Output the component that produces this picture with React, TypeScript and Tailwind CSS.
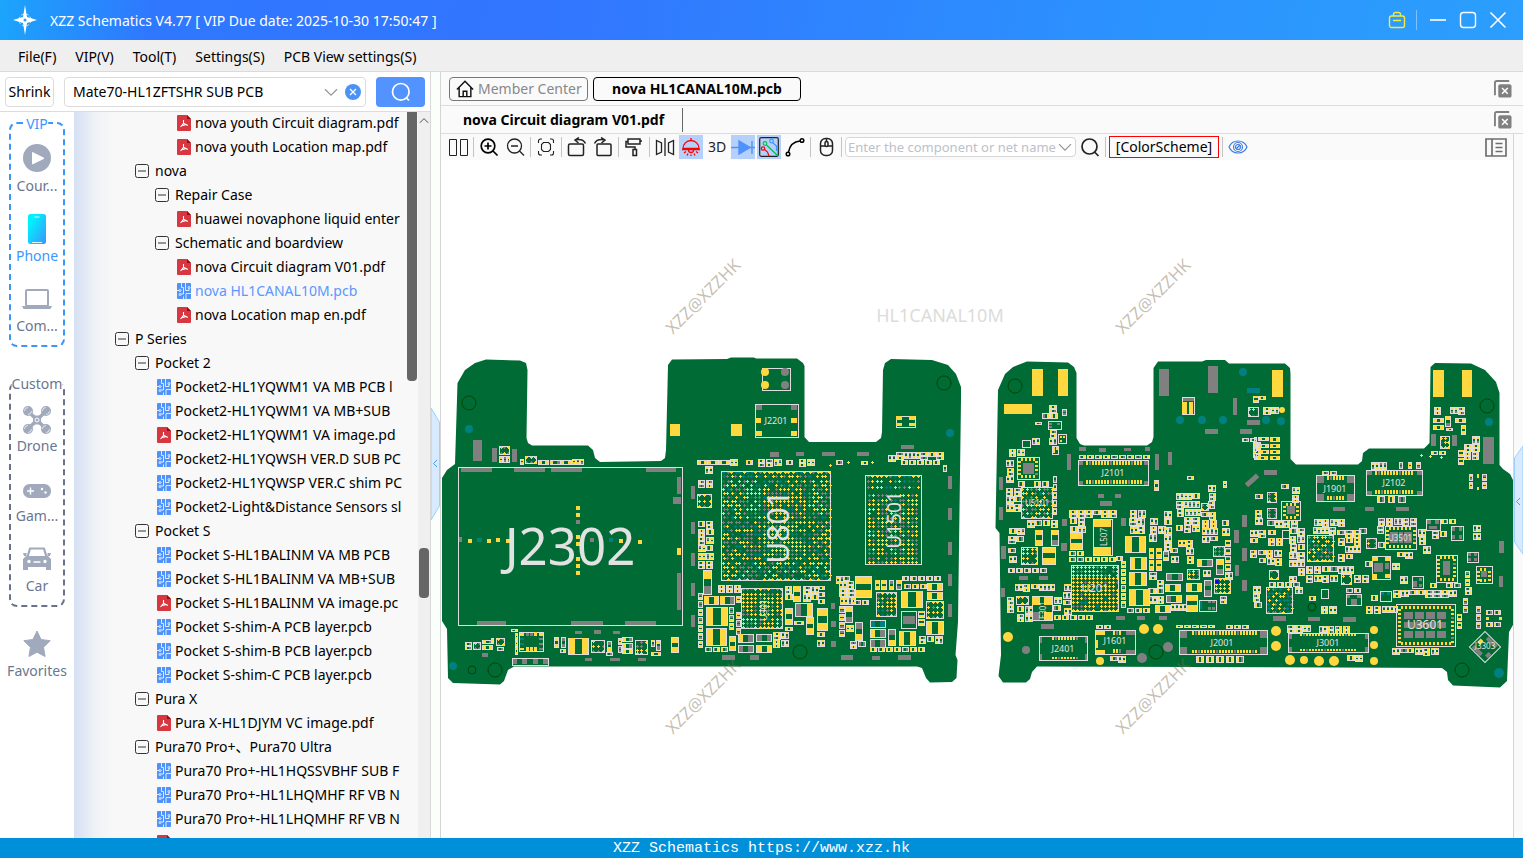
import type { ReactNode } from 'react';
import clsx from 'clsx';

type Rect = [number, number, number, number];
type Ink = 'y' | 'g' | 't';

const INK = { y: '#ffd83f', g: '#808080', t: '#008080', line: '#dedede', board: '#006b35' };

/* ---------- board drawing ---------- */

function random(seed: number) {
  let s = seed * 7919 + 13;
  return () => {
    s = (s * 1103515245 + 12345) % 2147483648;
    return s / 2147483648;
  };
}

// Collects the pads and silkscreen of one board section into a few paths.
class Sheet {
  pads = { y: '', g: '', t: '' };
  lines = '';

  pad(c: Ink, x: number, y: number, w: number, h: number) {
    this.pads[c] += `M${x} ${y}h${w}v${h}h${-w}z`;
    return this;
  }
  rects(c: Ink, list: Rect[]) {
    list.forEach(r => this.pad(c, ...r));
    return this;
  }
  outline(x: number, y: number, w: number, h: number) {
    this.lines += `M${x} ${y}h${w}v${h}h${-w}z`;
    return this;
  }
  // two-terminal part, pads on its long ends
  part(x: number, y: number, w: number, h: number, a: Ink = 'y', b: Ink = 'y', vertical = h > w) {
    this.outline(x, y, w, h);
    if (vertical) {
      const p = Math.max(4, Math.round(h * 0.34));
      this.pad(a, x + 1, y + 1, w - 2, p).pad(b, x + 1, y + h - p - 1, w - 2, p);
    } else {
      const p = Math.max(4, Math.round(w * 0.3));
      this.pad(a, x + 1, y + 1, p, h - 2).pad(b, x + w - p - 1, y + 1, p, h - 2);
    }
    return this;
  }
  parts(list: Rect[], seed = 1) {
    const r = random(seed);
    list.forEach(p => this.part(...p, r() < 0.25 ? 'g' : 'y', r() < 0.4 ? 'g' : 'y'));
    return this;
  }
  // big capacitors and coils: wide yellow ends
  big(list: Rect[], vertical = false) {
    list.forEach(p => this.part(...p, 'y', 'y', vertical));
    return this;
  }
  // ball grid array
  bga(x: number, y: number, w: number, h: number, mix: [number, number] = [0.25, 0.05], pitch = 12, frame = true, skew = 0) {
    const r = random(x + y * 3 + w);
    if (frame) this.outline(x, y, w, h);
    const nx = Math.max(2, Math.round(w / pitch));
    const ny = Math.max(2, Math.round(h / pitch));
    for (let j = 0; j < ny; j++) {
      for (let i = 0; i < nx; i++) {
        const k = r();
        if (k > 0.96) continue;
        const c: Ink = k < mix[1] ? 't' : k < mix[0] + mix[1] ? 'g' : 'y';
        const edge = i < 6 || i > nx - 6 || j < 4 || j > ny - 6;
        const off = skew && edge && (i + j) % 2 ? skew : 0;
        const cx = Math.round((x + 4 + (i * (w - 8)) / (nx - 1)) / 3) * 3 + off;
        const cy = Math.round((y + 4 + (j * (h - 8)) / (ny - 1)) / 3) * 3;
        this.pad(c, cx - 4, cy - 1, 9, 3).pad(c, cx - 1, cy - 4, 3, 9);
      }
    }
    return this;
  }
  // chip with pads round its edge and a gray slug in the middle
  quad(x: number, y: number, w: number, h: number, slug?: Rect) {
    this.outline(x, y, w, h);
    for (let i = x + 12; i < x + w - 12; i += 12) this.pad('y', i, y + 3, 6, 9).pad('y', i, y + h - 12, 6, 9);
    for (let j = y + 12; j < y + h - 12; j += 12) this.pad('y', x + 3, j, 9, 6).pad(j % 5 ? 'y' : 'g', x + w - 12, j, 9, 6);
    if (slug) this.pad('g', ...slug);
    return this;
  }
  connector(x: number, y: number, w: number, h: number, from: number, to: number, corner: [number, number], ph = 12) {
    this.outline(x, y, w, h);
    const [cw, ch] = corner;
    this.rects('g', [[x + 2, y + 2, cw, ch], [x + w - cw - 2, y + 2, cw, ch], [x + 2, y + h - ch - 2, cw, ch], [x + w - cw - 2, y + h - ch - 2, cw, ch]]);
    let n = 0;
    for (let i = from; i < to; i += 9) {
      n++;
      this.pad(n % 7 === 2 ? 'g' : 'y', i, y + 3, 6, ph).pad(n % 6 === 3 ? 'g' : 'y', i, y + h - ph - 3, 6, ph);
    }
    return this;
  }
  // loose field of small parts
  field(x: number, y: number, x2: number, y2: number, fill = 0.85) {
    const r = random(x * 5 + y + x2);
    const c = (): Ink => (r() < 0.7 ? 'y' : 'g');
    if (y2 - y < 16) {
      for (let i = x; i < x2 - 12; i += 24) if (r() < fill) this.part(i, y, 18, y2 - y, c(), c());
      return this;
    }
    if (x2 - x < 18) {
      for (let j = y; j < y2 - 12; j += 24) if (r() < fill) this.part(x, j, x2 - x, 18, c(), c());
      return this;
    }
    for (let j = y; j < y2 - 14; j += 24) {
      for (let i = x + Math.floor(r() * 4); i < x2 - 14; i += 24) {
        const k = r();
        if (k > fill) continue;
        if (k < fill * 0.4) this.part(i, j, 19, 9, c(), c()).part(i, j + 12, 19, 9, c(), c());
        else if (k < fill * 0.8) this.part(i, j, 9, 19, c(), c()).part(i + 12, j, 9, 19, c(), c());
        else this.part(i, j, 20, 14, c(), c());
      }
    }
    return this;
  }
}

const sectionA = new Sheet()
  .outline(55, 352, 673, 475)
  .rects('g', [[99, 270, 27, 63], [156, 294, 15, 42], [216, 297, 15, 39], [63, 354, 93, 12], [222, 354, 93, 12], [333, 354, 93, 12], [618, 354, 90, 12],
    [711, 381, 12, 51], [699, 441, 24, 21], [711, 669, 12, 111], [111, 813, 87, 12], [393, 813, 96, 12], [555, 813, 93, 12], [753, 408, 12, 39],
    [753, 516, 12, 36], [753, 609, 12, 39], [753, 699, 12, 39], [753, 795, 12, 36], [126, 909, 18, 12], [405, 843, 21, 9], [462, 840, 21, 12],
    [519, 843, 21, 9], [435, 924, 21, 9], [510, 924, 30, 9], [594, 924, 24, 9], [54, 561, 12, 15], [450, 564, 12, 12], [408, 510, 12, 12]])
  .rects('y', [[690, 222, 30, 36], [408, 468, 12, 12], [408, 489, 12, 12], [408, 555, 12, 12], [408, 576, 12, 12], [408, 621, 12, 12], [408, 642, 12, 12],
    [408, 663, 12, 12], [84, 567, 12, 12], [141, 567, 12, 12], [168, 564, 12, 12], [198, 567, 12, 12], [537, 567, 12, 12], [594, 570, 12, 12],
    [477, 570, 6, 12], [711, 594, 12, 21]])
  .rects('t', [[111, 564, 15, 12], [507, 564, 12, 12], [240, 864, 12, 6], [240, 880, 12, 6]])
  .parts([[295, 331, 30, 12], [330, 331, 30, 12], [363, 331, 30, 12], [396, 328, 9, 15], [408, 328, 9, 15], [420, 328, 9, 15], [241, 328, 10, 15],
    [179, 319, 8, 18], [190, 319, 8, 18], [201, 319, 8, 18], [76, 878, 18, 8], [76, 889, 18, 8], [127, 870, 30, 10], [127, 887, 30, 12], [153, 866, 8, 15],
    [172, 893, 18, 8], [214, 838, 18, 7], [225, 850, 8, 18], [225, 872, 8, 18], [225, 893, 8, 20], [344, 862, 12, 30], [363, 862, 14, 30], [361, 898, 15, 8],
    [502, 873, 12, 30], [499, 908, 18, 8], [535, 865, 8, 18], [535, 888, 8, 20], [547, 862, 30, 12], [547, 880, 30, 14], [547, 898, 30, 12],
    [635, 870, 8, 18], [648, 872, 12, 28], [634, 906, 28, 9]])
  .big([[385, 864, 60, 49]])
  .big([[694, 862, 21, 46]], true)
  .bga(178, 288, 30, 24)
  .bga(255, 318, 35, 22)
  .bga(101, 876, 21, 21, [0.6, 0])
  .bga(170, 864, 22, 22)
  .bga(455, 870, 38, 38, [0.3, 0.1])
  .bga(586, 872, 36, 42, [0.6, 0])
  .outline(238, 848, 73, 57)
  .rects('y', [[240, 850, 12, 8], [258, 892, 8, 12], [270, 892, 8, 12], [282, 892, 8, 12], [240, 893, 12, 8], [282, 847, 9, 12], [297, 850, 12, 8]])
  .rects('g', [[258, 847, 8, 11], [270, 847, 8, 11], [297, 864, 12, 6], [297, 878, 12, 6], [297, 893, 12, 8]])
  .outline(217, 924, 109, 21)
  .rects('g', [[217, 924, 14, 18], [246, 924, 15, 18], [279, 924, 15, 18], [309, 924, 15, 18]]);

const sectionB = new Sheet()
  .outline(195, 163, 131, 100)
  .outline(217, 54, 85, 67)
  .outline(619, 198, 58, 35)
  .rects('g', [[195, 165, 21, 15], [303, 165, 18, 15], [240, 306, 27, 15], [318, 306, 24, 12], [396, 306, 39, 12], [501, 306, 36, 12], [633, 285, 39, 12],
    [774, 378, 12, 39], [774, 474, 12, 36], [774, 576, 12, 39], [774, 672, 12, 36], [774, 762, 12, 39], [96, 915, 39, 15], [180, 915, 27, 15],
    [453, 915, 36, 15], [546, 918, 24, 12], [624, 915, 39, 15], [423, 760, 12, 17], [423, 813, 15, 18], [423, 873, 15, 18], [638, 798, 36, 24]])
  .rects('y', [[195, 204, 18, 15], [303, 204, 18, 15], [195, 243, 21, 15], [303, 243, 18, 15], [123, 222, 33, 36], [619, 199, 17, 10], [657, 199, 17, 10],
    [619, 218, 17, 10], [657, 218, 17, 10], [471, 336, 9, 3], [474, 333, 3, 9], [543, 336, 9, 3], [546, 333, 3, 9], [417, 345, 9, 3], [420, 342, 3, 9]])
  .bga(94, 363, 327, 328, [0.32, 0.2], 12, true, 4)
  .bga(154, 714, 123, 121, [0.22, 0.04], 12)
  .outline(526, 376, 168, 267)
  .bga(529, 374, 158, 40, [0.15, 0.22], 13, false)
  .bga(533, 432, 48, 208, [0.3, 0.03], 13, false)
  .bga(584, 432, 50, 208, [0.5, 0.02], 13, false)
  .bga(636, 432, 46, 208, [0.3, 0.03], 13, false)
  .bga(22, 432, 42, 40, [0.2, 0], 13)
  .bga(560, 726, 59, 72, [0.3, 0.08], 13)
  .bga(710, 753, 50, 52, [0.2, 0], 12)
  .outline(635, 783, 45, 52)
  .big([[22, 331, 30, 11], [54, 331, 30, 11], [87, 331, 30, 11]])
  .field(168, 330, 200, 343)
  .field(203, 328, 285, 348)
  .field(290, 331, 320, 343)
  .field(120, 328, 155, 348)
  .field(325, 328, 368, 348)
  .field(22, 350, 80, 382)
  .field(24, 392, 70, 415)
  .field(24, 514, 74, 660, 1)
  .field(438, 332, 460, 342, 1)
  .field(515, 334, 540, 343, 1)
  .field(595, 315, 615, 336)
  .field(619, 306, 768, 330, 1)
  .field(634, 332, 765, 342)
  .field(760, 345, 768, 380)
  .field(84, 706, 152, 734, 1)
  .field(138, 740, 150, 850)
  .field(26, 730, 36, 910, 1)
  .field(117, 772, 130, 835)
  .field(45, 893, 112, 903, 1)
  .field(286, 710, 310, 768)
  .field(338, 710, 382, 755, 1)
  .field(385, 708, 415, 718, 1)
  .field(385, 728, 415, 740, 1)
  .field(385, 748, 415, 760, 1)
  .field(250, 846, 290, 885, 0.6)
  .field(380, 846, 415, 905)
  .field(435, 680, 458, 740)
  .field(460, 680, 492, 692, 1)
  .field(447, 695, 490, 765, 1)
  .field(492, 752, 548, 764, 1)
  .field(448, 770, 462, 870, 1)
  .field(525, 783, 545, 805)
  .field(466, 826, 492, 870)
  .field(478, 875, 535, 905, 1)
  .field(540, 893, 700, 904, 1)
  .field(638, 680, 768, 692, 1)
  .field(642, 702, 705, 714, 1)
  .field(686, 783, 702, 835)
  .field(686, 860, 760, 876)
  .parts([[40, 662, 24, 70], [42, 738, 44, 24], [90, 738, 44, 24], [310, 708, 22, 46], [286, 776, 22, 48], [349, 803, 22, 50], [145, 852, 45, 24],
    [145, 885, 45, 22], [200, 852, 45, 22], [200, 885, 45, 22], [117, 860, 20, 42], [466, 770, 22, 48], [541, 838, 45, 24], [541, 867, 45, 24],
    [595, 838, 22, 48], [495, 818, 22, 54], [712, 700, 45, 20], [712, 726, 45, 22], [555, 690, 14, 28], [574, 690, 14, 28], [597, 690, 14, 28],
    [619, 690, 14, 28], [286, 832, 22, 8], [313, 813, 28, 10]], 9)
  .part(316, 760, 50, 40, 'g', 'y')
  .part(541, 810, 45, 22, 't', 't')
  .big([[49, 772, 64, 53], [49, 835, 60, 50], [635, 723, 62, 50], [709, 814, 50, 38], [628, 843, 48, 42]])
  .big([[382, 776, 30, 66], [497, 680, 48, 62]], true);

const sectionC = new Sheet()
  .rects('y', [[126, 57, 33, 81], [204, 57, 30, 81], [42, 162, 84, 30], [577, 156, 14, 36], [597, 156, 12, 36]])
  .rects('g', [[507, 57, 30, 81], [654, 48, 30, 81], [729, 144, 12, 51], [645, 237, 39, 15], [750, 237, 36, 15], [771, 210, 39, 15], [231, 312, 12, 48],
    [495, 312, 12, 48], [534, 306, 12, 39], [267, 291, 21, 12], [327, 294, 21, 12], [402, 294, 21, 9], [465, 291, 15, 12], [27, 381, 12, 39],
    [27, 471, 12, 39], [33, 588, 15, 39], [33, 714, 12, 27], [216, 507, 15, 21], [213, 579, 18, 24], [393, 504, 15, 24], [324, 432, 18, 12],
    [375, 432, 18, 12], [330, 453, 36, 15], [87, 678, 27, 12], [147, 678, 27, 12], [153, 822, 39, 15], [378, 798, 27, 12], [441, 798, 24, 12],
    [507, 798, 24, 12], [732, 540, 15, 39], [756, 495, 15, 36], [756, 594, 15, 39], [735, 645, 12, 33], [756, 690, 15, 33], [577, 142, 36, 12]])
  .rects('t', [[771, 114, 39, 15]])
  .outline(577, 141, 36, 53)
  .connector(265, 331, 211, 75, 288, 456, [11, 12])
  .quad(81, 322, 67, 66, [99, 339, 33, 33])
  .bga(93, 412, 94, 94, [0.35, 0.08], 12, true, 3)
  .bga(244, 646, 142, 138, [0.15, 0.04], 12)
  .bga(95, 592, 48, 50, [0.15, 0])
  .bga(592, 658, 35, 30, [0.5, 0])
  .bga(674, 684, 46, 46, [0.15, 0])
  .bga(670, 588, 32, 32, [0.6, 0.1])
  .bga(80, 738, 34, 26)
  .bga(774, 172, 30, 28, [0.3, 0.3])
  .bga(633, 460, 22, 22)
  .outline(310, 508, 57, 108)
  .rects('y', [[311, 510, 53, 21], [311, 591, 53, 23], [127, 742, 24, 22], [163, 742, 24, 22], [163, 787, 24, 22]])
  .rects('g', [[127, 787, 24, 22]])
  .outline(127, 740, 60, 72)
  .connector(148, 858, 145, 73, 185, 258, [6, 18], 8)
  .connector(316, 841, 120, 72, 370, 392, [27, 12])
  .rects('y', [[318, 843, 27, 12], [318, 899, 27, 12], [318, 870, 6, 24]])
  .connector(568, 841, 264, 72, 606, 800, [21, 21], 10)
  .outline(175, 215, 40, 22)
  .rects('g', [[178, 218, 9, 6], [201, 218, 9, 6], [178, 228, 9, 6]])
  .outline(206, 254, 22, 26)
  .rects('y', [[209, 257, 6, 8], [219, 257, 6, 8], [209, 269, 6, 8], [189, 291, 6, 8], [198, 291, 6, 8], [189, 301, 6, 8]])
  .outline(186, 288, 20, 24)
  .outline(98, 272, 24, 20)
  .field(155, 142, 205, 210, 0.6)
  .field(218, 178, 228, 196, 1)
  .field(136, 216, 156, 224, 1)
  .field(178, 240, 204, 282, 0.8)
  .field(128, 264, 150, 296, 1)
  .field(56, 298, 125, 322, 0.9)
  .field(50, 330, 80, 402, 1)
  .field(84, 394, 180, 408)
  .field(152, 345, 190, 395, 0.8)
  .field(48, 416, 90, 500, 0.9)
  .field(190, 378, 200, 500, 1)
  .field(108, 512, 200, 530)
  .field(56, 535, 98, 586)
  .field(56, 594, 88, 640)
  .field(55, 655, 205, 668)
  .field(52, 702, 205, 735)
  .field(52, 742, 76, 810)
  .field(80, 770, 122, 810)
  .field(190, 742, 212, 790)
  .field(220, 702, 238, 790, 1)
  .field(192, 795, 302, 808, 1)
  .field(268, 315, 490, 324, 1)
  .field(238, 480, 390, 500, 1)
  .field(240, 505, 282, 545, 1)
  .field(238, 605, 280, 616, 1)
  .field(238, 622, 375, 634, 1)
  .field(378, 620, 408, 632, 1)
  .field(395, 634, 407, 790, 1)
  .field(418, 482, 476, 552, 1)
  .field(480, 480, 520, 524, 0.8)
  .field(478, 530, 520, 590, 0.9)
  .field(522, 485, 556, 600, 0.9)
  .field(558, 430, 630, 560, 0.95)
  .field(634, 486, 690, 584, 0.9)
  .field(655, 405, 684, 480, 0.9)
  .field(695, 512, 720, 555, 1)
  .field(540, 570, 620, 655, 0.9)
  .field(705, 570, 722, 655, 1)
  .field(476, 668, 522, 765, 0.9)
  .field(640, 660, 668, 685)
  .field(705, 668, 730, 684)
  .field(690, 738, 728, 756, 1)
  .field(412, 774, 492, 788, 1)
  .field(545, 762, 585, 790)
  .field(592, 378, 612, 388, 1)
  .field(700, 394, 708, 414, 1)
  .field(320, 826, 366, 836, 1)
  .field(558, 825, 690, 833, 1)
  .field(708, 826, 775, 835, 1)
  .field(360, 918, 416, 936, 1)
  .field(755, 160, 775, 205, 0.8)
  .field(790, 138, 806, 170, 1)
  .field(757, 264, 810, 275, 1)
  .field(788, 278, 812, 336, 0.8)
  .parts([[135, 540, 22, 45], [184, 540, 22, 45], [530, 670, 48, 22], [525, 703, 46, 22], [590, 700, 45, 24], [621, 628, 45, 20], [679, 628, 22, 45],
    [643, 690, 20, 48], [495, 766, 45, 22], [529, 735, 45, 22], [478, 594, 12, 30], [498, 594, 16, 30], [520, 604, 14, 28], [478, 630, 12, 30],
    [498, 630, 16, 30], [492, 392, 14, 30], [620, 920, 20, 16], [650, 920, 20, 16], [680, 920, 20, 16], [710, 920, 20, 16], [740, 920, 20, 16]], 4)
  .big([[407, 558, 60, 50], [421, 621, 48, 36], [419, 667, 50, 38], [419, 717, 60, 50]])
  .big([[240, 548, 38, 50], [157, 592, 38, 50], [590, 735, 32, 48]], true)
  .outline(628, 750, 50, 34)
  .rects('g', [[654, 752, 9, 8], [667, 752, 9, 8], [654, 772, 9, 8], [667, 772, 9, 8]])
  .rects('t', [[630, 754, 5, 24]]);

const slugGrid: Rect[] = [];
for (let j = 0; j < 3; j++) for (let i = 0; i < 4; i++) slugGrid.push([462 + i * 33, 786 + j * 29, 27, 20]);

const sectionD = new Sheet()
  .rects('y', [[66, 60, 33, 81], [549, 60, 33, 81], [636, 60, 30, 81], [681, 372, 6, 12], [681, 411, 6, 9], [708, 801, 9, 9], [747, 801, 9, 9],
    [510, 315, 9, 3], [513, 312, 3, 9], [537, 318, 9, 3], [540, 315, 3, 9], [570, 321, 9, 3], [573, 318, 3, 9]])
  .rects('g', [[699, 261, 33, 81], [543, 252, 15, 36], [606, 255, 15, 33], [42, 360, 39, 15], [249, 471, 36, 12], [345, 471, 27, 12], [438, 471, 39, 12],
    [747, 573, 15, 36], [747, 678, 12, 33], [69, 798, 39, 15], [174, 801, 36, 12], [279, 801, 39, 15], [420, 546, 24, 33], [447, 546, 12, 33], [462, 546, 24, 33]])
  .connector(199, 376, 114, 78, 232, 278, [21, 20])
  .connector(349, 361, 168, 75, 376, 490, [15, 12])
  .connector(115, 850, 240, 57, 150, 320, [9, 15], 6)
  .quad(440, 764, 176, 124)
  .rects('g', slugGrid)
  .quad(406, 529, 94, 69)
  .quad(559, 616, 63, 80, [579, 634, 21, 42])
  .quad(95, 455, 56, 55, [111, 468, 24, 24])
  .quad(679, 650, 48, 50, [693, 663, 18, 18])
  .outline(366, 618, 55, 70)
  .rects('y', [[367, 620, 18, 12], [404, 620, 16, 12], [367, 672, 14, 14], [404, 672, 16, 12]])
  .rects('g', [[372, 639, 27, 27], [404, 640, 14, 18], [291, 735, 10, 9], [322, 735, 10, 9], [303, 748, 18, 16], [531, 510, 12, 12], [556, 510, 12, 12], [538, 528, 24, 10]])
  .bga(173, 556, 78, 79, [0.3, 0.12], 12, true, 3)
  .bga(49, 712, 78, 78, [0.3, 0.3], 12, true, 3)
  .bga(58, 660, 28, 28, [0.2, 0])
  .bga(275, 674, 28, 28, [0.2, 0])
  .bga(570, 260, 28, 34, [0.2, 0.1], 10)
  .bga(350, 564, 28, 32, [0.7, 0.1])
  .bga(52, 428, 28, 30, [0.6, 0.2])
  .bga(52, 476, 28, 30, [0.7, 0.1])
  .outline(289, 733, 45, 32)
  .outline(530, 508, 41, 33)
  .outline(604, 530, 36, 40)
  .rects('g', [[606, 532, 10, 12], [626, 532, 10, 12], [606, 554, 10, 12], [626, 554, 10, 12]])
  .outline(652, 606, 33, 30)
  .rects('g', [[654, 608, 9, 9], [672, 608, 9, 9], [654, 624, 9, 9], [672, 624, 9, 9]])
  .outline(486, 680, 34, 36)
  .rects('g', [[488, 694, 14, 16], [506, 684, 9, 9], [506, 702, 9, 9]])
  .outline(391, 724, 32, 30)
  .rects('t', [[393, 726, 9, 9], [411, 726, 9, 9]])
  .outline(215, 718, 20, 27)
  .outline(97, 540, 20, 24)
  .field(28, 138, 50, 148, 1)
  .field(38, 172, 88, 190)
  .field(550, 172, 645, 196, 0.8)
  .field(590, 234, 610, 242, 1)
  .field(642, 260, 685, 345, 0.9)
  .field(625, 300, 640, 345, 1)
  .field(545, 303, 590, 312, 1)
  .field(14, 262, 20, 330, 1)
  .field(93, 402, 120, 424, 1)
  .field(125, 412, 150, 455, 1)
  .field(15, 432, 48, 520, 0.9)
  .field(52, 512, 145, 535, 0.9)
  .field(0, 540, 50, 600, 0.8)
  .field(52, 540, 96, 590, 0.8)
  .field(0, 600, 95, 660, 0.9)
  .field(118, 535, 170, 700, 0.9)
  .field(190, 508, 285, 530, 0.7)
  .field(190, 532, 258, 552, 1)
  .field(262, 540, 330, 645, 0.9)
  .field(168, 650, 306, 668, 1)
  .field(165, 675, 260, 702, 0.85)
  .field(305, 535, 345, 585, 0.6)
  .field(310, 675, 360, 712, 0.8)
  .field(57, 698, 145, 708, 0.9)
  .field(10, 710, 45, 795, 0.8)
  .field(136, 712, 160, 732, 1)
  .field(178, 738, 212, 750, 1)
  .field(212, 770, 258, 786, 1)
  .field(290, 716, 340, 728, 1)
  .field(362, 736, 388, 760, 1)
  .field(348, 768, 436, 792, 0.9)
  .field(342, 634, 362, 658, 1)
  .field(425, 640, 462, 656, 1)
  .field(382, 505, 500, 524, 1)
  .field(382, 530, 404, 606, 0.8)
  .field(504, 515, 526, 590, 0.9)
  .field(520, 590, 556, 620, 1)
  .field(545, 545, 600, 572, 0.9)
  .field(575, 508, 625, 520, 0.9)
  .field(440, 606, 490, 626, 0.9)
  .field(450, 680, 484, 712, 1)
  .field(430, 720, 630, 756, 0.85)
  .field(540, 700, 625, 712, 0.9)
  .field(668, 525, 700, 570, 0.9)
  .field(645, 665, 657, 710, 0.9)
  .field(645, 712, 680, 730)
  .field(692, 600, 742, 640, 0.6)
  .field(705, 706, 740, 735, 0.8)
  .field(640, 745, 652, 790, 1)
  .field(680, 770, 690, 832, 1)
  .field(622, 792, 634, 850, 1)
  .field(426, 894, 466, 926, 1)
  .field(470, 894, 575, 924, 0.8)
  .field(362, 338, 418, 356, 1)
  .field(447, 338, 456, 356, 1)
  .field(474, 338, 484, 356, 1)
  .field(500, 338, 510, 356, 1)
  .field(216, 363, 268, 374, 1)
  .field(112, 826, 180, 846, 1)
  .field(208, 828, 304, 844, 1)
  .field(290, 916, 344, 934, 1)
  .field(657, 374, 668, 424, 1)
  .field(698, 374, 709, 424, 1)
  .field(708, 782, 758, 792, 1)
  .field(708, 818, 758, 830, 1)
  .parts([[383, 438, 20, 18], [414, 438, 20, 18], [445, 438, 20, 18], [586, 198, 14, 32], [635, 226, 12, 28]], 3)
  .big([[550, 205, 30, 11], [550, 226, 30, 11], [616, 205, 30, 11], [22, 318, 30, 11], [60, 262, 28, 11], [60, 282, 28, 11], [60, 300, 28, 11],
    [60, 318, 28, 11], [26, 262, 28, 9], [26, 284, 28, 9], [30, 300, 26, 9]]);

const SECTIONS: { x: number; sheet: Sheet }[] = [
  { x: 440, sheet: sectionA },
  { x: 690, sheet: sectionB },
  { x: 990, sheet: sectionC },
  { x: 1250, sheet: sectionD },
];

const BOARDS = [
  '457.5,383 465,370 475,363 486,359.5 520,360.5 526,363 527.5,370 526.5,438 528,443 532,445.5 588,445.5 593,450 595,458 600,462 661,461 665,458 666,450 668,365 672,359.5 727,359 731,357.5 754,357.5 756,358.5 797,358.5 803,363 804.5,366 804.5,437 809,442 876,442 881,438 882,432 883,370 885,363 891,359 932,360 948,365 956,374 961,387 961,400 958,622 955.5,655 957.5,660 956.5,678 952,682 930,682.5 926,678 922,668 917,666.5 514,666.5 508,670 504,681 500,684.5 453,683 448,678 447,629 442,621 442,478 447,470 455,464',
  '998,390 1005,374 1013,367 1027,361.5 1068,362.5 1074,367 1076.5,373 1076.5,438 1080,444 1084,445.5 1147,445.5 1152,442 1153.5,437 1153.5,368 1158,361.5 1202,361.5 1206,360 1225,360 1229,363.5 1285,363.5 1290,368 1290.5,374 1290.5,459 1296,464.5 1358,464.5 1362,461 1363,453 1369,448.5 1424,448.5 1429.5,443 1430.5,367 1435,363 1471,363.5 1485,370 1496,382 1499.5,393 1499.5,465 1503,469 1510,474 1513,480 1513,625 1509,632 1507,681 1500,687.5 1453,685.5 1448,680 1447,672 1442,668 1340,667.5 1037,666.5 1032,672 1030,679 1026,682.5 1003,682.5 998.5,676 1001,655 999.5,533 995.5,528',
];

// x, y, radius in board pixels
const DOTS: [string, number, number, number][] = [
  [INK.t, 469, 429, 4], [INK.t, 453, 666, 4], [INK.y, 765, 372, 4], [INK.y, 765, 385, 4], [INK.g, 785, 372, 4], [INK.g, 785, 385, 4], [INK.t, 950, 433, 4],
  [INK.t, 1243, 372, 4], [INK.t, 1180, 420, 4], [INK.t, 1202, 420, 4], [INK.t, 1223, 420, 4], [INK.t, 1266, 420, 4], [INK.t, 1281, 421, 4], [INK.y, 1282, 410, 3],
  [INK.t, 1489, 422, 4], [INK.t, 1499, 673, 5], [INK.y, 1008, 637, 5], [INK.y, 1144, 629, 5], [INK.y, 1158, 629, 5], [INK.y, 1100, 661, 4], [INK.g, 1026, 650, 4],
  [INK.g, 1142, 658, 5], [INK.g, 1168, 647, 5], ['#0000ff', 1217, 582, 2], [INK.y, 1276, 631, 5], [INK.y, 1276, 646, 5], [INK.y, 1290, 660, 5], [INK.y, 1304, 660, 4],
  [INK.y, 1319, 661, 5], [INK.y, 1334, 661, 5], [INK.y, 1374, 630, 4], [INK.y, 1374, 645, 4], [INK.y, 1374, 661, 4],
];

const RINGS: [number, number, number][] = [
  [469, 403, 7], [472, 670, 4], [495, 670, 7], [944, 383, 7], [800, 652, 7], [1015, 386, 7], [1156, 652, 7], [1487, 406, 7], [1312, 607, 4], [1462, 670, 7],
];

// label, centre x, baseline, size, turned a quarter
const LABELS: [string, number, number, number, boolean?][] = [
  ['J2302', 570, 565, 51], ['J2201', 776, 424, 9], ['U801', 789, 527, 30, true], ['U1501', 901, 520, 19, true], ['U301', 767, 610, 9, true],
  ['J2101', 1113, 476, 9], ['U5101', 1037, 506, 8], ['L507', 1107, 537, 8, true], ['U201', 1095, 592, 11], ['F301', 1046, 610, 8, true],
  ['J2401', 1063, 652, 9], ['J1601', 1115, 644, 9], ['J2001', 1222, 646, 9], ['J1901', 1335, 492, 9], ['J2102', 1394, 486, 9], ['U3501', 1400, 541, 8],
  ['J3001', 1328, 646, 9], ['U3601', 1425, 629, 12], ['J3303', 1485, 649, 8],
];

const MARKS: [number, number][] = [[673, 335], [1123, 335], [673, 735], [1123, 735]];

function BoardView() {
  return (
    <svg viewBox="441 160 1072 678" className="block h-full w-full" role="img" aria-label="HL1CANAL10M" fontFamily="'Noto Sans', 'Open Sans', sans-serif">
      <text x="940" y="322" textAnchor="middle" fontSize="18" fill="#dcdcdc">HL1CANAL10M</text>
      {BOARDS.map(points => (
        <polygon key={points} points={points} fill={INK.board} />
      ))}
      {RINGS.map(([x, y, r]) => (
        <circle key={`${x}-${y}`} cx={x} cy={y} r={r} fill="none" stroke="#004500" />
      ))}
      {SECTIONS.map(({ x, sheet }) => (
        <g key={x} transform={`translate(${x} 350) scale(${1 / 3})`} shapeRendering="crispEdges">
          <path d={sheet.pads.g} fill={INK.g} />
          <path d={sheet.pads.t} fill={INK.t} />
          <path d={sheet.lines} fill="none" stroke={INK.line} strokeWidth="3" />
          <path d={sheet.pads.y} fill={INK.y} />
        </g>
      ))}
      <g transform="rotate(-42 1252 481)"><rect x="1245" y="478" width="15" height="5" fill={INK.g} /></g>
      <g transform="rotate(45 1485 647)">
        <rect x="1474" y="636" width="22" height="22" fill="none" stroke={INK.line} />
        <rect x="1480" y="637" width="13" height="4" fill={INK.g} />
        <rect x="1476" y="653" width="12" height="4" fill={INK.g} />
        <rect x="1476" y="644" width="4" height="5" fill={INK.y} />
        <rect x="1491" y="648" width="4" height="5" fill={INK.g} />
      </g>
      {DOTS.map(([fill, x, y, r]) => (
        <circle key={`${x}-${y}`} cx={x} cy={y} r={r} fill={fill} />
      ))}
      {LABELS.map(([label, x, y, size, turned]) => (
        <text key={label} textAnchor="middle" fontSize={size} fill="#e2e2e2" x={turned ? undefined : x} y={turned ? undefined : y}
          transform={turned ? `translate(${x} ${y}) rotate(-90)` : undefined}>
          {label}
        </text>
      ))}
      {MARKS.map(([x, y]) => (
        <text key={`${x}-${y}`} transform={`translate(${x} ${y}) rotate(-45)`} fontSize="17" fill="#7d6f58" fillOpacity="0.45">XZZ@XZZHK</text>
      ))}
    </svg>
  );
}

/* ---------- icons ---------- */

function Icon({ size = 20, stroke = '#222', width = 1.4, box = 20, children }: { size?: number; stroke?: string; width?: number; box?: number; children: ReactNode }) {
  return (
    <svg width={size} height={size} viewBox={`0 0 ${box} ${box}`} fill="none" stroke={stroke} strokeWidth={width} className="shrink-0" aria-hidden="true">
      {children}
    </svg>
  );
}

function PdfIcon() {
  return (
    <svg width="14" height="16" viewBox="0 0 14 16" className="shrink-0" aria-hidden="true">
      <path d="M1 0h9l4 4v11a1 1 0 0 1-1 1H1a1 1 0 0 1-1-1V1a1 1 0 0 1 1-1z" fill="#d7373f" />
      <path d="M10 0l4 4h-4z" fill="#8c1219" />
      <path d="M6.500 5v3.200L10.800 10.500M6.800 8.200L3.500 12M4.500 10.800l5-1.300" fill="none" stroke="#fff" strokeWidth="1.100" />
    </svg>
  );
}

function PcbIcon() {
  return (
    <svg width="14" height="16" viewBox="0 0 14 16" className="shrink-0" aria-hidden="true">
      <rect width="14" height="16" rx="1" fill="#4f92fb" />
      <g fill="none" stroke="#fff" strokeWidth="0.800">
        <path d="M4.500 0v4.500h2V11H4M8.500 0v7.500H12V5.500M9 16v-5.500h5M6.500 16v-2.500M0 7.500h2" />
        <circle cx="12" cy="4.500" r="1" />
        <circle cx="3" cy="7.500" r="1" />
        <circle cx="3" cy="11.500" r="1" />
      </g>
    </svg>
  );
}

function FoldIcon() {
  return (
    <svg width="14" height="14" viewBox="0 0 14 14" fill="none" stroke="#333" className="shrink-0" aria-hidden="true">
      <rect x="0.500" y="0.500" width="13" height="13" rx="2" />
      <path d="M3 7h8" />
    </svg>
  );
}

const GRAY = '#a1a9bd';

const navIcons: Record<string, ReactNode> = {
  course: (
    <svg width="30" height="30" viewBox="0 0 30 30"><circle cx="15" cy="14" r="14" fill={GRAY} /><path d="M10.500 8.500v11.500L22 14.300z" fill="#fff" stroke="#fff" strokeLinejoin="round" /></svg>
  ),
  phone: (
    <svg width="30" height="30" viewBox="0 0 30 30">
      <defs><linearGradient id="phone" x1="0" x2="1" y1="0" y2="1"><stop offset="0.200" stopColor="#00f2fe" /><stop offset="1" stopColor="#3d92fc" /></linearGradient></defs>
      <rect x="6" width="18" height="30" rx="2.500" fill="url(#phone)" /><path d="M12.500 3h5M10 28.500h10" stroke="#d5f5ff" />
    </svg>
  ),
  computer: (
    <svg width="30" height="30" viewBox="0 0 30 30"><rect x="4" y="6" width="22" height="16" rx="1" fill="none" stroke={GRAY} strokeWidth="2" /><path d="M0 22h30l-1.500 3h-27z" fill={GRAY} /></svg>
  ),
  drone: (
    <svg width="30" height="30" viewBox="0 0 30 30">
      <path d="M6 7l18 18M24 7L6 25" stroke={GRAY} strokeWidth="3.500" />
      {[[6, 6], [24, 6], [6, 24], [24, 24]].map(([x, y]) => (
        <g key={`${x}${y}`}><circle cx={x} cy={y + 1} r="5" fill={GRAY} /><path d={`M${x - 3.500} ${y + 1}a3.500 3.500 0 0 1 3.500-3.500M${x + 3.500} ${y + 1}a3.500 3.500 0 0 1-3.500 3.500`} fill="none" stroke="#fff" strokeWidth="0.700" /></g>
      ))}
      <rect x="11" y="11.500" width="8" height="9" rx="2" fill={GRAY} /><circle cx="15" cy="16" r="2" fill="none" stroke="#fff" />
    </svg>
  ),
  game: (
    <svg width="30" height="30" viewBox="0 0 30 30"><rect x="1" y="10" width="28" height="14" rx="6.500" fill={GRAY} /><path d="M5 17h7M8.500 13.500v7" stroke="#fff" strokeWidth="1.500" /><circle cx="20" cy="15" r="1.200" fill="#fff" /><circle cx="23.500" cy="18.500" r="1.200" fill="#fff" /></svg>
  ),
  car: (
    <svg width="30" height="30" viewBox="0 0 30 30">
      <path d="M5.500 13L8 4.500h14L24.500 13" fill="none" stroke={GRAY} strokeWidth="2.200" strokeLinejoin="round" />
      <path d="M4 12h22l3 3v11h-5v-3H6v3H1V15zM1 9h3.500v3H2z" fill={GRAY} /><path d="M29 9h-3.500v3H28z" fill={GRAY} />
      <circle cx="7" cy="17.500" r="1.700" fill="#fff" /><circle cx="23" cy="17.500" r="1.700" fill="#fff" /><path d="M11.500 18h7" stroke="#fff" strokeWidth="1.500" />
    </svg>
  ),
  star: (
    <svg width="30" height="30" viewBox="0 0 30 30"><path d="M15 2l4 8.500 9.200 1.200-6.700 6.500 1.600 9.300L15 23.200l-8.100 4.300 1.600-9.300L1.800 11.700 11 10.500z" fill={GRAY} stroke={GRAY} strokeLinejoin="round" /></svg>
  ),
};

/* ---------- tree ---------- */

type Node = { level: number; kind: 'folder' | 'pdf' | 'pcb'; name: string; active?: boolean };

const INDENT = ['pl-[41px]', 'pl-[61px]', 'pl-[81px]', 'pl-[101px]'];

const TREE: Node[] = [
  { level: 3, kind: 'pdf', name: 'nova youth Circuit diagram.pdf' },
  { level: 3, kind: 'pdf', name: 'nova youth Location map.pdf' },
  { level: 1, kind: 'folder', name: 'nova' },
  { level: 2, kind: 'folder', name: 'Repair Case' },
  { level: 3, kind: 'pdf', name: 'huawei novaphone liquid enter' },
  { level: 2, kind: 'folder', name: 'Schematic and boardview' },
  { level: 3, kind: 'pdf', name: 'nova Circuit diagram V01.pdf' },
  { level: 3, kind: 'pcb', name: 'nova HL1CANAL10M.pcb', active: true },
  { level: 3, kind: 'pdf', name: 'nova Location map en.pdf' },
  { level: 0, kind: 'folder', name: 'P Series' },
  { level: 1, kind: 'folder', name: 'Pocket 2' },
  { level: 2, kind: 'pcb', name: 'Pocket2-HL1YQWM1 VA MB PCB l' },
  { level: 2, kind: 'pcb', name: 'Pocket2-HL1YQWM1 VA MB+SUB' },
  { level: 2, kind: 'pdf', name: 'Pocket2-HL1YQWM1 VA image.pd' },
  { level: 2, kind: 'pcb', name: 'Pocket2-HL1YQWSH VER.D SUB PC' },
  { level: 2, kind: 'pcb', name: 'Pocket2-HL1YQWSP VER.C shim PC' },
  { level: 2, kind: 'pcb', name: 'Pocket2-Light&Distance Sensors sl' },
  { level: 1, kind: 'folder', name: 'Pocket S' },
  { level: 2, kind: 'pcb', name: 'Pocket S-HL1BALINM VA MB PCB' },
  { level: 2, kind: 'pcb', name: 'Pocket S-HL1BALINM VA MB+SUB' },
  { level: 2, kind: 'pdf', name: 'Pocket S-HL1BALINM VA image.pc' },
  { level: 2, kind: 'pcb', name: 'Pocket S-shim-A PCB layer.pcb' },
  { level: 2, kind: 'pcb', name: 'Pocket S-shim-B PCB layer.pcb' },
  { level: 2, kind: 'pcb', name: 'Pocket S-shim-C PCB layer.pcb' },
  { level: 1, kind: 'folder', name: 'Pura X' },
  { level: 2, kind: 'pdf', name: 'Pura X-HL1DJYM VC image.pdf' },
  { level: 1, kind: 'folder', name: 'Pura70 Pro+、Pura70 Ultra' },
  { level: 2, kind: 'pcb', name: 'Pura70 Pro+-HL1HQSSVBHF SUB F' },
  { level: 2, kind: 'pcb', name: 'Pura70 Pro+-HL1LHQMHF RF VB N' },
  { level: 2, kind: 'pcb', name: 'Pura70 Pro+-HL1LHQMHF RF VB N' },
  { level: 2, kind: 'pdf', name: 'Pura70 Pro+-HL1LHQMHF RF VB I' },
];

function TreeRow({ node }: { node: Node }) {
  return (
    <li>
      <button className={clsx('flex h-6 w-full items-center text-left whitespace-nowrap', INDENT[node.level], node.active ? 'text-[#5b97ff]' : 'text-black')}>
        <span className={clsx('w-5 shrink-0', node.kind !== 'folder' && 'pl-0.5')}>
          {node.kind === 'folder' ? <FoldIcon /> : node.kind === 'pdf' ? <PdfIcon /> : <PcbIcon />}
        </span>
        {node.name}
      </button>
    </li>
  );
}

function NavItem({ icon, label, active }: { icon: string; label: string; active?: boolean }) {
  return (
    <button className={clsx('flex h-[70px] w-full flex-col items-center', active ? 'text-[#3b96ff]' : 'text-[#6b7690]')}>
      {navIcons[icon]}
      <span className="leading-6">{label}</span>
    </button>
  );
}

function NavGroup({ title, active, children }: { title: string; active?: boolean; children: ReactNode }) {
  return (
    <section className={clsx('relative h-[225px] w-14 rounded-lg border-2 border-dashed pt-5', active ? 'border-[#3b96f5]' : 'border-[#69728a]')}>
      <h2 className={clsx('absolute -top-3 left-1/2 -translate-x-1/2 bg-white leading-6', active ? 'text-[#3b96ff]' : 'text-[#6b7690]')}>{title}</h2>
      {children}
    </section>
  );
}

/* ---------- toolbar ---------- */

function Tool({ label, on, children }: { label: string; on?: boolean; children: ReactNode }) {
  return (
    <button aria-label={label} className={clsx('flex h-6 w-6 shrink-0 items-center justify-center', on && 'bg-[#b5d0fb]')}>{children}</button>
  );
}

const Divider = () => <span className="mx-px h-5 w-px shrink-0 bg-[#c4c4c4]" />;

function Toolbar() {
  return (
    <div className="flex h-[26px] items-center gap-0.5 bg-[#fafafa] pl-[5px]">
      <Tool label="Split view"><Icon width={1}><path d="M1.500 2.500h7v16h-7zM12.500 2.500h7v16h-7z" /></Icon></Tool>
      <Divider />
      <Tool label="Zoom in"><Icon stroke="#000" width={1.700}><circle cx="9" cy="9" r="6.800" /><path d="M14 14l4.500 4.500M5.500 9h7M9 5.500v7" /></Icon></Tool>
      <Tool label="Zoom out"><Icon width={1.300}><circle cx="9.500" cy="9" r="7" /><path d="M14.500 14l4.500 4.500M6 9h7" /></Icon></Tool>
      <Divider />
      <Tool label="Fit"><Icon width={1.100}><path d="M2.500 6V4a2 2 0 0 1 2-2H6M14 2h1.500a2 2 0 0 1 2 2v2M17.500 14v2a2 2 0 0 1-2 2H14M6 18H4.500a2 2 0 0 1-2-2v-2M7.500 5.500h5l2 2v5l-2 2h-5l-2-2v-5z" /></Icon></Tool>
      <Divider />
      <Tool label="Rotate left"><Icon width={1.500}><rect x="1.500" y="7" width="15" height="11.500" rx="1.500" /><path d="M8 3c5-1 9 .5 10.500 3.500M12 .500L8 3l3.500 3" /></Icon></Tool>
      <Tool label="Rotate right"><Icon width={1.500}><rect x="4" y="7" width="14" height="11.500" rx="1" /><path d="M12 3C7 2 3 3.500 1.500 6.500M8 .500L12 3 8.500 6" /></Icon></Tool>
      <Divider />
      <Tool label="Paint"><Icon width={1.500}><path d="M4 2h12v5H4zM4 4.500H2V10h9v2M16 4h2M9 12.500h3.500v6H9z" /></Icon></Tool>
      <Divider />
      <Tool label="Mirror"><Icon width={1.300}><path d="M10 1v18M1.500 3.500v14L6.500 15V6zM18.500 3.500v14L13.500 15V6z" /></Icon></Tool>
      <Tool label="Lamp" on><Icon stroke="#ff0000" width={1.300}><path d="M10 1v2M2 11.500a8 8 0 0 1 16 0zM1 12.500h18M7.500 13a2.500 2.500 0 0 0 5 0M3 16l2-1.500M6 18.500l1-2M10 19v-1.500M14 18.500l-1-2M17 16l-2-1.500" /></Icon></Tool>
      <button className="w-6 shrink-0 text-center text-sm text-[#222]">3D</button>
      <Tool label="Diode" on><Icon size={24} box={24} stroke="#4f92fb"><path d="M0 12.500h24M21 6v13" /><path d="M8 6v13l11-6.500z" fill="#4f92fb" /></Icon></Tool>
      <Tool label="Nets" on>
        <Icon width={1.200}>
          <rect x="0.700" y="0.700" width="18.600" height="18.600" rx="1.500" />
          <path d="M7.500 8l11 10.500" stroke="#00c24a" strokeWidth="1.400" />
          <circle cx="6" cy="6.500" r="1.800" stroke="#00c24a" />
          <circle cx="12.500" cy="4" r="1.800" stroke="#3b96ff" /><path d="M13.500 5.500l4 3.500v5" stroke="#3b96ff" />
          <circle cx="4" cy="11.500" r="1.700" stroke="#ff0000" /><path d="M5.500 12.500l3 2.500 1.500 4" stroke="#ff0000" />
        </Icon>
      </Tool>
      <Tool label="Curve"><Icon width={1.500} stroke="#000"><circle cx="3" cy="17" r="1.800" /><circle cx="17" cy="3.500" r="1.800" /><path d="M3.500 15C5 7.500 9 4.500 15 4" /></Icon></Tool>
      <Divider />
      <Tool label="Mouse"><Icon width={1.500}><rect x="4.500" y="1.500" width="12" height="17" rx="5" /><path d="M4.500 9h12M10.500 1.500V4" /><rect x="9" y="4.500" width="3" height="5" rx="1.500" fill="#fafafa" /></Icon></Tool>
      <Divider />
      <label className="flex h-5 w-[231px] shrink-0 items-center rounded-sm border border-[#d6d6d6] bg-white px-0.5">
        <input aria-label="Component or net" placeholder="Enter the component or net name" className="w-full min-w-0 flex-1 text-[13px] outline-none placeholder:text-[#bcc1c9]" />
        <Icon stroke="#8f949c" width={1.500} size={16}><path d="M2.500 6.500L10 14l7.500-7.500" /></Icon>
      </label>
      <Tool label="Find"><Icon width={1.700}><circle cx="9.500" cy="9.500" r="7.500" /><path d="M14.500 15l4 4" /></Icon></Tool>
      <Divider />
      <button className="h-[22px] w-[110px] shrink-0 border border-[#ff0000] text-center text-sm leading-5 whitespace-nowrap text-black">[ColorScheme]</button>
      <Divider />
      <Tool label="Visibility"><Icon stroke="#3f7fe0" width={1.200}><path d="M1 10c3.500-8 14.500-8 18 0-3.500 8-14.500 8-18 0z" /><circle cx="10" cy="10" r="4.500" /><circle cx="10" cy="10" r="2.500" /><path d="M8 12l4-4" /></Icon></Tool>
      <button aria-label="Side panel" className="mr-1.5 ml-auto">
        <svg width="22" height="19" viewBox="0 0 22 19" fill="none" stroke="#6e6e6e" strokeWidth="1.700" aria-hidden="true"><path d="M1 1h20v17H1zM7 1v17M10.500 5.500h7M10.500 9.500h7M10.500 13.500h7" /></svg>
      </button>
    </div>
  );
}

function CloseAll() {
  return (
    <button aria-label="Close all" className="mr-[11px] ml-auto">
      <svg width="18" height="18" viewBox="0 0 19 19" aria-hidden="true">
        <path d="M1 16V3a2 2 0 0 1 2-2h13" fill="none" stroke="#808080" strokeWidth="2" />
        <rect x="4.500" y="4.500" width="14" height="14" rx="2" fill="#808080" /><path d="M8.500 8.500l6 6M14.500 8.500l-6 6" stroke="#fff" strokeWidth="1.600" />
      </svg>
    </button>
  );
}

export default function App() {
  return (
    <div className="flex h-screen flex-col overflow-hidden bg-white font-['Noto_Sans','Noto_Sans_CJK_SC',sans-serif] text-sm text-black">
      <header className="flex h-10 shrink-0 items-center bg-[linear-gradient(100deg,#1ba5fc_0%,#2f78fe_10%,#3275ff_35%,#2b93fe_75%,#2b9ffd_100%)] pl-3 text-white">
        <svg width="26" height="30" viewBox="0 0 26 30" aria-hidden="true">
          <circle cx="13" cy="15" r="6" fill="none" stroke="#fff" strokeOpacity="0.700" strokeDasharray="3 1.700" />
          <path d="M13 0l2 12 10 3-10 3-2 12-2-12-10-3 10-3z" fill="#fff" /><circle cx="13" cy="15" r="1.500" fill="#2aa0fc" />
        </svg>
        <h1 className="ml-3 pt-0.5">XZZ Schematics V4.77 [ VIP Due date: 2025-10-30 17:50:47 ]</h1>
        <div className="mr-4 ml-auto flex items-center">
          <button aria-label="Toolbox"><Icon size={18} box={18} stroke="#f3ea3c"><rect x="1.500" y="5" width="15" height="11.500" rx="2" /><path d="M5.500 5V3.500a2 2 0 0 1 2-2h3a2 2 0 0 1 2 2V5M5 9.500h8" /></Icon></button>
          <span className="mr-3 ml-2.5 h-5 w-px bg-white/40" />
          <button aria-label="Minimize" className="mr-3"><Icon size={18} box={18} stroke="#fff" width={1.600}><path d="M1 9h16" /></Icon></button>
          <button aria-label="Maximize" className="mr-3"><Icon size={18} box={18} stroke="#fff"><rect x="1.500" y="1.500" width="15" height="15" rx="3" /></Icon></button>
          <button aria-label="Close"><Icon size={18} box={18} stroke="#fff" width={1.600}><path d="M1.500 1.500l15 15M16.500 1.500l-15 15" /></Icon></button>
        </div>
      </header>

      <nav className="flex h-8 shrink-0 items-center gap-[19px] border-b border-[#dadada] bg-[#efefef] px-[18px] pt-0.5">
        {['File(F)', 'VIP(V)', 'Tool(T)', 'Settings(S)', 'PCB View settings(S)'].map(m => (
          <button key={m}>{m}</button>
        ))}
      </nav>

      <div className="flex min-h-0 flex-1">
        <aside className="flex w-[431px] shrink-0 flex-col border-r border-[#d8d8d8]">
          <div className="flex h-10 shrink-0 items-center border-b border-[#dcdcdc] bg-white pr-[5px] pl-[5px]">
            <button className="h-[30px] w-[49px] rounded border border-[#dcdcdc]">Shrink</button>
            <label className="ml-2.5 flex h-[30px] flex-1 items-center rounded border border-[#dcdcdc] pr-1 pl-2">
              <input aria-label="Search files" defaultValue="Mate70-HL1ZFTSHR SUB PCB" className="min-w-0 flex-1 outline-none" />
              <Icon size={16} stroke="#999" width={1.600}><path d="M2.500 6.500L10 14l7.500-7.500" /></Icon>
              <svg width="16" height="16" viewBox="0 0 16 16" className="ml-1.5" aria-hidden="true"><circle cx="8" cy="8" r="8" fill="#4a93f5" /><path d="M5 5l6 6M11 5l-6 6" stroke="#fff" strokeWidth="1.300" /></svg>
            </label>
            <button aria-label="Search" className="ml-2.5 flex h-[30px] w-[49px] items-center justify-center rounded-sm bg-[#5293ff]">
              <Icon stroke="#fff" width={1.700}><circle cx="9.800" cy="9.800" r="8.300" /><path d="M15.500 16l2.500 2.500" /></Icon>
            </button>
          </div>
          <div className="flex min-h-0 flex-1">
            <div className="flex w-[74px] shrink-0 flex-col items-center overflow-hidden bg-white pt-[10px]">
              <NavGroup title="VIP" active>
                <NavItem icon="course" label="Cour..." />
                <NavItem icon="phone" label="Phone" active />
                <NavItem icon="computer" label="Com..." />
              </NavGroup>
              <div className="h-[35px] shrink-0" />
              <NavGroup title="Custom">
                <NavItem icon="drone" label="Drone" />
                <NavItem icon="game" label="Gam..." />
                <NavItem icon="car" label="Car" />
              </NavGroup>
              <div className="mt-[22px] w-full"><NavItem icon="star" label="Favorites" /></div>
            </div>
            <div className="flex min-w-0 flex-1 bg-[linear-gradient(90deg,#d5e0f3_0px,#f0f2f7_22px,#f8f8f8_40px)]">
              <ul className="-mt-px min-w-0 flex-1 overflow-hidden">
                {TREE.map((node, i) => <TreeRow key={i} node={node} />)}
              </ul>
              <div className="w-3 shrink-0 pl-px"><div className="h-[269px] w-2.5 rounded-b bg-[#666]" /></div>
              <div className="flex w-3 shrink-0 flex-col items-center bg-[#efefef]">
                <Icon size={12} stroke="#333"><path d="M3 18l7-7 7 7" /></Icon>
                <div className="mt-[424px] h-[50px] w-2.5 rounded bg-[#666]" />
              </div>
            </div>
          </div>
        </aside>

        <div className="flex w-2.5 shrink-0 flex-col border-r border-[#d5d5d5] bg-[#fbfffb] pt-[335px]">
          <button aria-label="Collapse file tree">
            <svg width="9" height="114" viewBox="0 0 9 114" fill="none" aria-hidden="true"><path d="M0 1l8.500 14v84L0 113z" fill="#d8eafe" stroke="#9fd0fb" /><path d="M6 53L2.500 56.500 6 60" stroke="#4a9df0" /></svg>
          </button>
        </div>

        <main className="flex min-w-0 flex-1 flex-col">
          <div className="flex h-[34px] shrink-0 items-center border-b border-[#dcdcdc] bg-[#fafafa] pl-2">
            <button className="flex h-6 w-[139px] items-center gap-1 rounded border border-[#777] px-1.5 whitespace-nowrap text-[#888]">
              <Icon size={18} stroke="#111" width={1.600}><path d="M1 10.500L10 1.500l9 9M3.500 8.500v10h13v-10M8 18.500v-6h4v6" /></Icon>
              Member Center
            </button>
            <button className="ml-[5px] h-6 w-52 rounded border border-black font-bold whitespace-nowrap">nova HL1CANAL10M.pcb</button>
            <CloseAll />
          </div>
          <div className="flex h-7 shrink-0 items-center border-b border-[#dcdcdc] bg-[#fafafa]">
            <button className="h-6 border-r border-[#666] pr-[18px] pl-[22px] font-bold whitespace-nowrap">nova Circuit diagram V01.pdf</button>
            <CloseAll />
          </div>
          <div className="flex min-h-0 flex-1">
            <div className="flex min-w-0 flex-1 flex-col">
              <Toolbar />
              <div className="min-h-0 flex-1"><BoardView /></div>
            </div>
            <div className="w-2.5 shrink-0 border-l border-[#d5d5d5] bg-[#fafafa] pt-[311px]">
              <button aria-label="Open side panel">
                <svg width="9" height="110" viewBox="0 0 9 110" fill="none" aria-hidden="true"><path d="M9 1L.5 13v84L9 109z" fill="#d8eafe" stroke="#9fd0fb" /><path d="M6 53L2.500 56.500 6 60" stroke="#4a9df0" /></svg>
              </button>
            </div>
          </div>
        </main>
      </div>

      <footer className="h-5 shrink-0 bg-[#0090da] text-center font-['Liberation_Mono',monospace] text-[15px] leading-[22px] text-white">
        XZZ Schematics https://www.xzz.hk
      </footer>
    </div>
  );
}
